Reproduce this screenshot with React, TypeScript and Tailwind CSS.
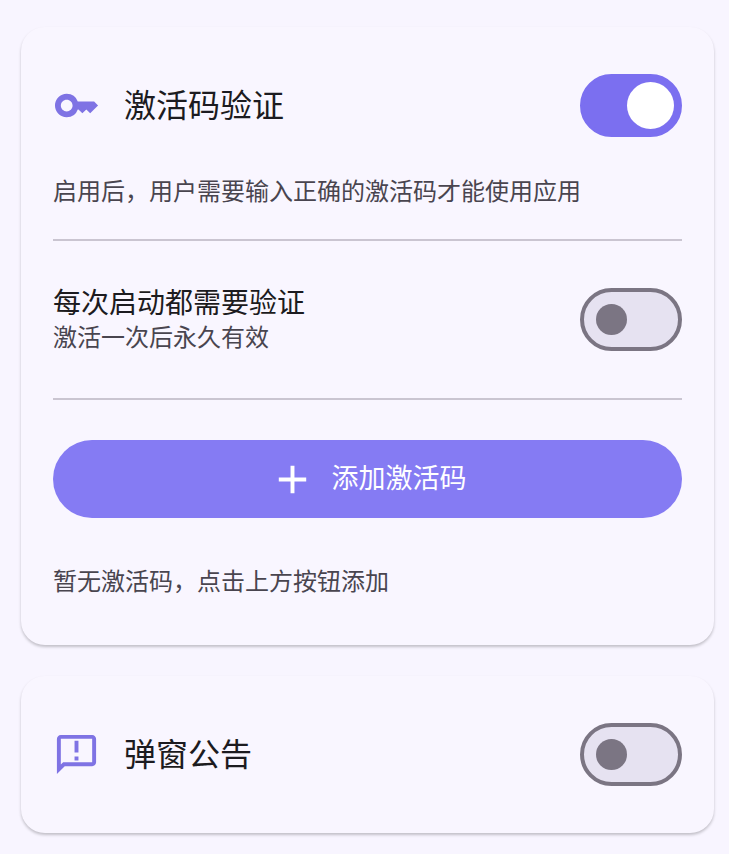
import { useState } from 'react';
import type { ReactNode } from 'react';
import { MdAdd, MdKey, MdOutlineAnnouncement } from 'react-icons/md';

interface SwitchProps {
  id: string;
  checked: boolean;
  onChange: (checked: boolean) => void;
}

function Switch({ id, checked, onChange }: SwitchProps) {
  return (
    <input
      id={id}
      type="checkbox"
      role="switch"
      checked={checked}
      onChange={(e) => onChange(e.target.checked)}
      className="flex h-[63px] w-[102px] shrink-0 cursor-pointer appearance-none items-center rounded-full border-4 border-[#7b7583] bg-[#e6e2f1] px-3 before:size-[31px] before:rounded-full before:bg-[#7b7583] before:content-[''] checked:justify-end checked:border-[#7b6ff0] checked:bg-[#7b6ff0] checked:px-1 checked:before:size-[47px] checked:before:bg-white"
    />
  );
}

function Card({ children }: { children: ReactNode }) {
  return (
    <section className="rounded-3xl bg-[#f9f6ff] p-8 shadow-[0_2px_3px_rgba(0,0,0,0.22)]">
      {children}
    </section>
  );
}

interface CardHeaderProps extends SwitchProps {
  icon: ReactNode;
  title: string;
}

function CardHeader({ icon, title, ...rest }: CardHeaderProps) {
  return (
    <div className="flex min-h-[93px] items-center gap-6">
      <span className="text-[47px] text-[#7f73e4]">{icon}</span>
      <h2 className="flex-1 text-[32px] leading-10">
        <label htmlFor={rest.id}>{title}</label>
      </h2>
      <Switch {...rest} />
    </div>
  );
}

export default function App() {
  const [codeEnabled, setCodeEnabled] = useState(true);
  const [everyLaunch, setEveryLaunch] = useState(false);
  const [announcement, setAnnouncement] = useState(false);

  return (
    <main className="flex min-h-screen flex-col gap-[31px] bg-[#f8f5ff] pt-[27px] pr-[15px] pb-5 pl-[21px] font-['Liberation_Sans','Noto_Sans_CJK_SC',sans-serif] text-[#1c1b20]">
      <Card>
        <CardHeader
          id="code-enabled"
          icon={<MdKey />}
          title="激活码验证"
          checked={codeEnabled}
          onChange={setCodeEnabled}
        />
        <p className="mt-4 text-2xl leading-[47px] text-[#49454f]">
          启用后，用户需要输入正确的激活码才能使用应用
        </p>

        <hr className="mt-6 border-t-2 border-[#cac5d1]" />

        <div className="mt-8 flex min-h-[93px] items-center justify-between gap-4">
          <div>
            <label htmlFor="every-launch" className="block text-[28px] leading-9">
              每次启动都需要验证
            </label>
            <p className="text-2xl leading-8 text-[#49454f]">
              {everyLaunch ? '每次启动都需要验证' : '激活一次后永久有效'}
            </p>
          </div>
          <Switch id="every-launch" checked={everyLaunch} onChange={setEveryLaunch} />
        </div>

        <hr className="mt-8 border-t-2 border-[#cac5d1]" />

        <button
          type="button"
          className="mt-10 flex h-[78px] w-full cursor-pointer items-center justify-center gap-4 rounded-full bg-[#857bf3] text-[27px] text-white"
        >
          <MdAdd className="size-[47px]" />
          添加激活码
        </button>

        <p className="mt-10 pb-2 text-2xl leading-[47px] text-[#49454f]">
          暂无激活码，点击上方按钮添加
        </p>
      </Card>

      <Card>
        <CardHeader
          id="announcement"
          icon={<MdOutlineAnnouncement />}
          title="弹窗公告"
          checked={announcement}
          onChange={setAnnouncement}
        />
      </Card>
    </main>
  );
}
